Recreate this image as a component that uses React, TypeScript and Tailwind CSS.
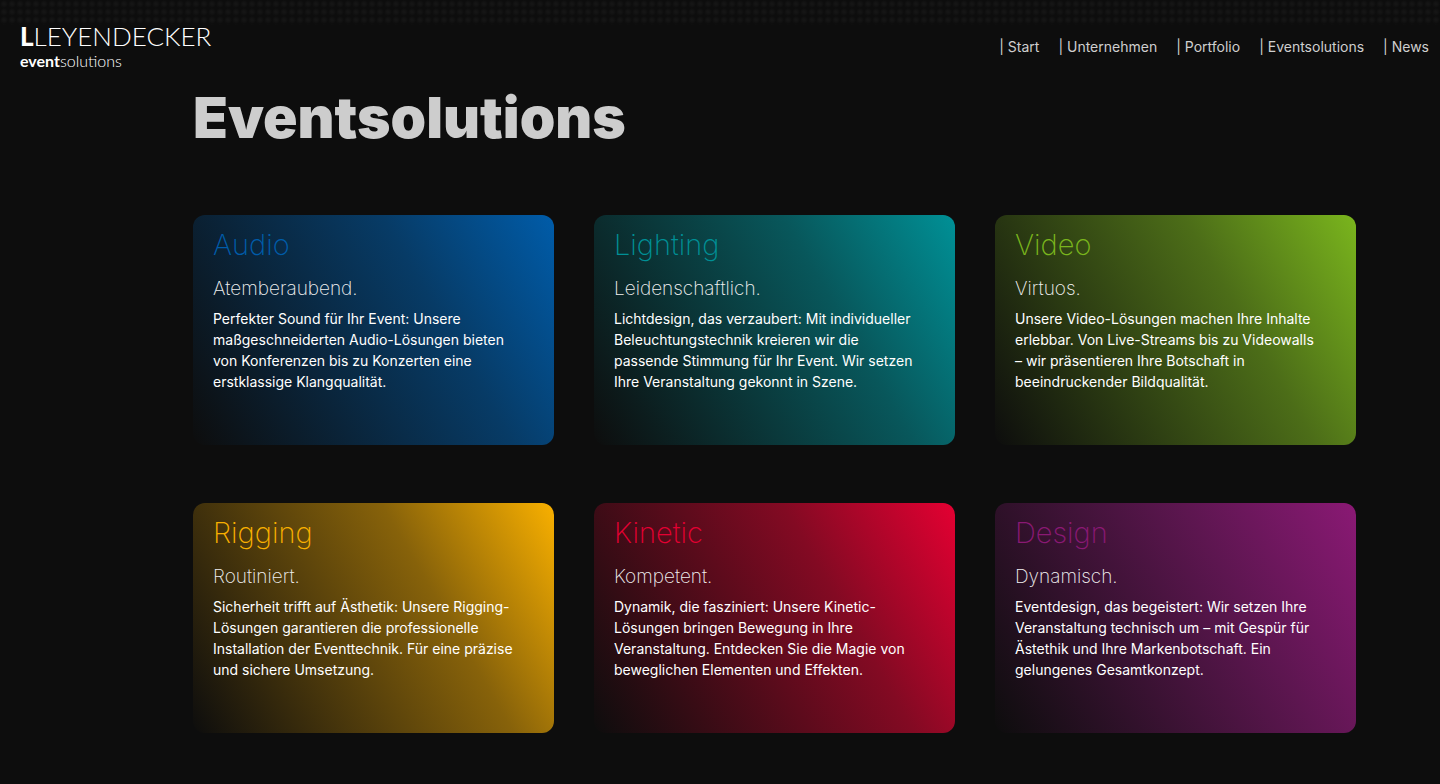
const nav = ["Start", "Unternehmen", "Portfolio", "Eventsolutions", "News"];

const cards = [
  {
    title: "Audio",
    lead: "Atemberaubend.",
    lines: ["Perfekter Sound für Ihr Event: Unsere", "maßgeschneiderten Audio-Lösungen bieten", "von Konferenzen bis zu Konzerten eine", "erstklassige Klangqualität."],
    color: "text-[#005ca9]",
    fill: "via-[#073b66] to-[#005ca9]",
  },
  {
    title: "Lighting",
    lead: "Leidenschaftlich.",
    lines: ["Lichtdesign, das verzaubert: Mit individueller", "Beleuchtungstechnik kreieren wir die", "passende Stimmung für Ihr Event. Wir setzen", "Ihre Veranstaltung gekonnt in Szene."],
    color: "text-[#009096]",
    fill: "via-[#08575b] to-[#009096]",
  },
  {
    title: "Video",
    lead: "Virtuos.",
    lines: ["Unsere Video-Lösungen machen Ihre Inhalte", "erlebbar. Von Live-Streams bis zu Videowalls", "– wir präsentieren Ihre Botschaft in", "beeindruckender Bildqualität."],
    color: "text-[#7ab51d]",
    fill: "via-[#4c6d18] to-[#7ab51d]",
  },
  {
    title: "Rigging",
    lead: "Routiniert.",
    lines: ["Sicherheit trifft auf Ästhetik: Unsere Rigging-", "Lösungen garantieren die professionelle", "Installation der Eventtechnik. Für eine präzise", "und sichere Umsetzung."],
    color: "text-[#f9b000]",
    fill: "via-[#87620a] to-[#f9b000]",
  },
  {
    title: "Kinetic",
    lead: "Kompetent.",
    lines: ["Dynamik, die fasziniert: Unsere Kinetic-", "Lösungen bringen Bewegung in Ihre", "Veranstaltung. Entdecken Sie die Magie von", "beweglichen Elementen und Effekten."],
    color: "text-[#e40032]",
    fill: "via-[#830a23] to-[#e40032]",
  },
  {
    title: "Design",
    lead: "Dynamisch.",
    lines: ["Eventdesign, das begeistert: Wir setzen Ihre", "Veranstaltung technisch um – mit Gespür für", "Ästethik und Ihre Markenbotschaft. Ein", "gelungenes Gesamtkonzept."],
    color: "text-[#8a1974]",
    fill: "via-[#5d1650] to-[#8a1974]",
  },
];

export default function App() {
  return (
    <div className="min-h-screen bg-[#0d0d0d] font-['Inter',sans-serif] text-white">
      <header>
        <div className="h-[25px] bg-[radial-gradient(circle,#151515_1px,#0d0d0d_4px)] bg-[size:8px_8px]" />
        <div className="flex h-[65px] items-start justify-between pr-[11px] pl-5">
          <a href="#start" className="block font-['Lato',sans-serif]">
            <span className="block text-[26px] leading-[22px] font-light whitespace-nowrap">
              <b className="font-black">L</b>LEYENDECKER
            </span>
            <span className="block text-base leading-7 font-light whitespace-nowrap">
              <b className="font-bold">event</b>solutions
            </span>
          </a>
          <nav className="flex gap-[19px] pt-3 text-sm leading-5 text-[#cfcfcf]">
            {nav.map((n) => (
              <a key={n} href={"#" + n.toLowerCase()} className="whitespace-nowrap">
                | {n}
              </a>
            ))}
          </nav>
        </div>
      </header>
      <main className="pr-[84px] pb-12 pl-[193px]">
        <h1 className="text-[57px] leading-[56px] font-black text-[#cdcdcd]">Eventsolutions</h1>
        <div className="mt-[69px] grid grid-cols-3 gap-x-10 gap-y-[58px]">
          {cards.map((c) => (
            <section
              key={c.title}
              className={"min-h-[230px] rounded-xl bg-linear-[60deg] from-[#0d0d0d] via-65% px-5 pt-3 " + c.fill}
            >
              <h2 className={"text-[29px] leading-9 font-extralight " + c.color}>{c.title}</h2>
              <h3 className="mt-3 text-[19px] leading-7 font-extralight text-[#f0f0f0]">{c.lead}</h3>
              <p className="mt-[5px] text-sm leading-[21px] whitespace-nowrap">
                {c.lines.map((l) => (
                  <span key={l} className="block">
                    {l}
                  </span>
                ))}
              </p>
            </section>
          ))}
        </div>
      </main>
    </div>
  );
}
